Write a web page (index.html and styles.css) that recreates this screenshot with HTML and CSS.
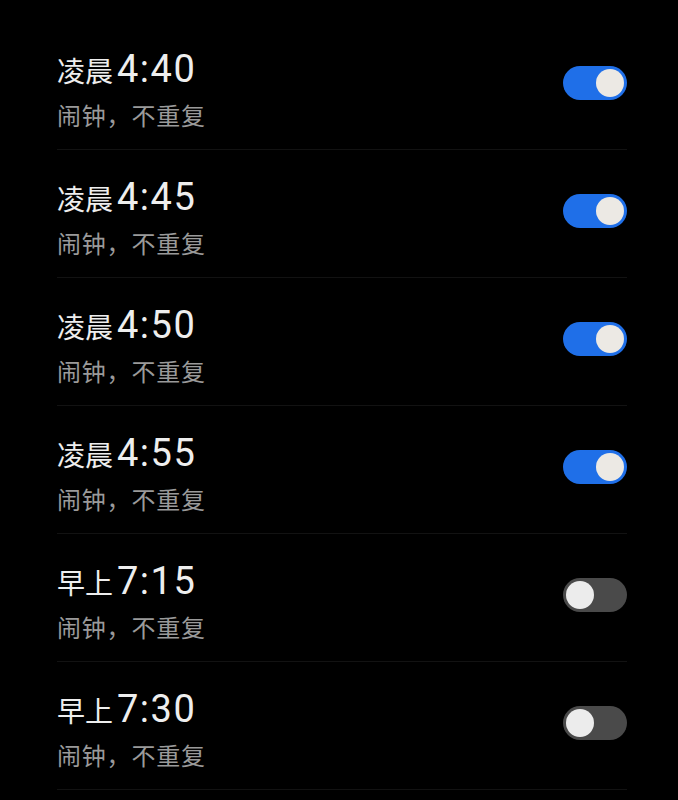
FILE: index.html
```html
<!DOCTYPE html>
<html lang="zh">
<head>
<meta charset="utf-8">
<link rel="stylesheet" href="styles.css">
</head>
<body>
<div class="list">
  <div class="row">
    <div class="text">
      <div class="title"><span class="period">凌晨</span><span class="time">4:40</span></div>
      <div class="sub">闹钟，不重复</div>
    </div>
    <div class="toggle on"><span class="thumb"></span></div>
  </div>
  <div class="row">
    <div class="text">
      <div class="title"><span class="period">凌晨</span><span class="time">4:45</span></div>
      <div class="sub">闹钟，不重复</div>
    </div>
    <div class="toggle on"><span class="thumb"></span></div>
  </div>
  <div class="row">
    <div class="text">
      <div class="title"><span class="period">凌晨</span><span class="time">4:50</span></div>
      <div class="sub">闹钟，不重复</div>
    </div>
    <div class="toggle on"><span class="thumb"></span></div>
  </div>
  <div class="row">
    <div class="text">
      <div class="title"><span class="period">凌晨</span><span class="time">4:55</span></div>
      <div class="sub">闹钟，不重复</div>
    </div>
    <div class="toggle on"><span class="thumb"></span></div>
  </div>
  <div class="row">
    <div class="text">
      <div class="title"><span class="period">早上</span><span class="time">7:15</span></div>
      <div class="sub">闹钟，不重复</div>
    </div>
    <div class="toggle off"><span class="thumb"></span></div>
  </div>
  <div class="row">
    <div class="text">
      <div class="title"><span class="period">早上</span><span class="time">7:30</span></div>
      <div class="sub">闹钟，不重复</div>
    </div>
    <div class="toggle off"><span class="thumb"></span></div>
  </div>
</div>
</body>
</html>
```
FILE: styles.css
```css
html, body {
  margin: 0;
  padding: 0;
  background: #000;
  height: 800px;
  overflow: hidden;
}
body {
  font-family: "Roboto", "Noto Sans CJK SC", sans-serif;
}
.list {
  padding: 22px 51px 0 57px;
  display: flex;
  flex-direction: column;
}
.row {
  height: 127px;
  border-bottom: 1px solid #121212;
  display: flex;
  justify-content: space-between;
  align-items: flex-start;
  box-sizing: content-box;
}
.text {
  padding-top: 25px;
  display: flex;
  flex-direction: column;
}
.title {
  height: 44px;
  line-height: 44px;
  color: #eeeeee;
  white-space: nowrap;
}
.period {
  font-family: "Noto Sans CJK SC", sans-serif;
  font-size: 28px;
}
.time {
  font-size: 38px;
  letter-spacing: 1.5px;
  margin-left: 4px;
}
.sub {
  margin-top: 9px;
  height: 30px;
  line-height: 30px;
  font-family: "Noto Sans CJK SC", sans-serif;
  font-size: 24px;
  letter-spacing: 0.8px;
  color: #9a9a9a;
}
.toggle {
  margin-top: 44px;
  width: 64px;
  height: 34px;
  border-radius: 17px;
  display: flex;
  align-items: center;
  padding: 0 3px;
  box-sizing: border-box;
}
.toggle.on {
  background: #1f6fe8;
  justify-content: flex-end;
}
.toggle.off {
  background: #4a4a4a;
  justify-content: flex-start;
}
.thumb {
  width: 28px;
  height: 28px;
  border-radius: 50%;
  background: #ece9e4;
}
.toggle.off .thumb {
  background: #ececec;
}
```
